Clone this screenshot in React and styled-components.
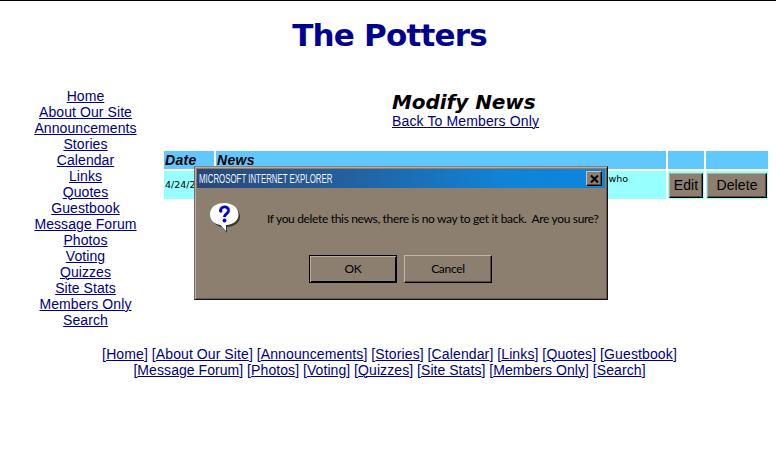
import React from "react";
import styled, { createGlobalStyle } from "styled-components";

const GlobalStyle = createGlobalStyle`
  * { box-sizing: border-box; }
  body { margin: 0; background: #fff; font-family: "Liberation Sans", Arial, sans-serif; overflow: hidden; }
`;

const Page = styled.div`
  position: relative;
  width: 776px;
  height: 457px;
  border-top: 1px solid #000;
`;

const SiteTitle = styled.h1`
  margin: 0;
  padding: 16px 0 0 3px;
  height: 87px;
  text-align: center;
  font: bold 31px/36px Verdana, "DejaVu Sans", sans-serif;
  letter-spacing: ${(p) => p.$spacing}px;
  color: #000090;
`;

const Columns = styled.div`
  display: flex;
  height: 258px;
`;

const SideNav = styled.nav`
  width: 164px;
  padding-left: 7px;
  display: flex;
  flex-direction: column;
  align-items: center;
`;

const Link = styled.a`
  font-size: 14px;
  line-height: 16px;
  letter-spacing: ${(p) => p.$spacing ?? 0.08}px;
  color: #000080;
  text-decoration: underline;
  text-underline-offset: 1px;
  text-decoration-thickness: 1px;
  white-space: nowrap;
`;

const Main = styled.main`
  width: 604px;
`;

const Intro = styled.header`
  margin-left: 228px;
  height: 63px;
  display: flex;
  flex-direction: column;
  align-items: flex-start;
`;

const Heading = styled.h2`
  margin: 0;
  padding-top: 2px;
  height: 25px;
  font: italic bold 20px/24px Verdana, "DejaVu Sans", sans-serif;
  letter-spacing: -0.05px;
  white-space: nowrap;
  color: #000;
`;

const NewsTable = styled.div`
  display: grid;
  grid-template-columns: 50px 450px 36px 62px;
  grid-template-rows: 18px 28px;
  gap: 2px;
`;

const HeadCell = styled.div`
  background: #60c8ff;
  padding-left: 1px;
  font: italic bold 14px/18px "Liberation Sans", Arial, sans-serif;
  letter-spacing: 0.3px;
`;

const Cell = styled.div`
  background: #98ffff;
  padding: ${(p) => p.$pad || "0 1px"};
  display: flex;
  justify-content: ${(p) => p.$align || "flex-start"};
  font: 9.5px/${(p) => p.$line || 27}px Verdana, "DejaVu Sans", sans-serif;
  white-space: nowrap;
`;

const TableButton = styled.button`
  flex: 1;
  height: 25px;
  margin-top: 2px;
  padding: 0 0 2px;
  background: #8c7f70;
  border: 1px solid;
  border-color: #b5aaa0 #000 #000 #b5aaa0;
  box-shadow: inset -1px -1px #51483f;
  font: 14px/20px "Liberation Sans", Arial, sans-serif;
  letter-spacing: 0.1px;
  color: #000;
`;

const FooterNav = styled.footer`
  display: flex;
  flex-direction: column;
  align-items: center;
  padding-left: 3px;
`;

const FooterRow = styled.div`
  font-size: 14px;
  line-height: 16px;
  letter-spacing: ${(p) => p.$spacing}px;
  word-spacing: -0.2px;
  color: #000080;
  white-space: nowrap;
  ${Link} { letter-spacing: inherit; }
`;

const Dialog = styled.section`
  position: absolute;
  left: 194px;
  top: 165px;
  width: 414px;
  height: 134px;
  padding: 2px;
  background: #8c7f70;
  border: 1px solid;
  border-color: #8c7f70 #17120e #17120e #776b60;
  box-shadow: inset 1px 1px #b9aea5, inset -1px -1px #655b51;
`;

const TitleBar = styled.div`
  display: flex;
  align-items: center;
  justify-content: space-between;
  height: 19px;
  padding: 0 3px 0 2px;
  background: linear-gradient(90deg, #294779 0%, #245f9d 35%, #1083d6 75%, #0c86dd 100%);
`;

const DialogTitle = styled.div`
  width: 134px;
  font: 13px/19px "Liberation Sans Narrow", "Liberation Sans", sans-serif;
  color: #f0f4ff;
  white-space: nowrap;
  transform: scaleX(0.605);
  transform-origin: left;
`;

const CloseButton = styled.button`
  display: grid;
  place-items: center;
  width: 16px;
  height: 15px;
  padding: 0;
  background: #8c7f70;
  border: 1px solid;
  border-color: #c8beb4 #000 #000 #c8beb4;
  box-shadow: inset -1px -1px #51483f;
`;

const MessageRow = styled.div`
  display: flex;
  height: 67px;
  padding: 14px 0 0 12px;
  svg { flex: none; }
`;

const Message = styled.p`
  margin: 8px 0 0 26px;
  font: 12px/18px Lato, sans-serif;
  letter-spacing: ${(p) => p.$spacing}px;
  white-space: pre;
  color: #000;
`;

const Actions = styled.div`
  display: flex;
  gap: 7px;
  margin-left: 112px;
`;

const DialogButton = styled.button`
  width: 88px;
  height: 28px;
  padding: 0 0 1px;
  background: #8c7f70;
  border: 1px solid;
  border-color: ${(p) => (p.$default ? "#000" : "#c0b5ab #000 #000 #c0b5ab")};
  box-shadow: ${(p) =>
    p.$default
      ? "inset 1px 1px #b9aea5, inset -1px -1px #000"
      : "inset -1px -1px #51483f"};
  font: 12px/18px Lato, sans-serif;
  letter-spacing: -0.3px;
  color: #000;
`;

const navItems = [
  "Home", "About Our Site", "Announcements", "Stories", "Calendar", "Links",
  "Quotes", "Guestbook", "Message Forum", "Photos", "Voting", "Quizzes",
  "Site Stats", "Members Only", "Search",
];

function LinkRow({ items, spacing }) {
  return (
    <FooterRow $spacing={spacing}>
      {items.map((item, i) => (
        <React.Fragment key={item}>
          {i > 0 && " "}[<Link>{item}</Link>]
        </React.Fragment>
      ))}
    </FooterRow>
  );
}

function QuestionIcon() {
  return (
    <svg width="32" height="32" viewBox="0 0 32 32">
      <path d="M16 2C7 2 2 7 2 13.5c0 5.500 4 9.500 10 10.500l5 6v-6c8-.5 13-4.500 13-10.500C30 7 24 2 16 2Z" fill="#3d352e" transform="translate(1 1)" />
      <path d="M15 1C6 1 1 6 1 12.500c0 5.500 4 9.500 10.500 10.500l5.500 6v-6c8-.5 12.500-4.500 12.500-10.500C29.500 6 24 1 15 1Z" fill="#fff" />
      <path d="M11.500 9.500C11 3.500 20 3.500 19.500 9c-.3 2.500-4 3-4 6" fill="none" stroke="#0000d8" strokeWidth="2.800" />
      <circle cx="11.800" cy="9" r="1.700" fill="#0000d8" />
      <circle cx="15.500" cy="18.500" r="1.900" fill="#0000d8" />
    </svg>
  );
}

export default function App() {
  return (
    <>
      <GlobalStyle />
      <Page>
        <SiteTitle $spacing={-0.8}>The Potters</SiteTitle>
        <Columns>
          <SideNav>
            {navItems.map((item) => <Link key={item}>{item}</Link>)}
          </SideNav>
          <Main>
            <Intro>
              <Heading>Modify News</Heading>
              <Link $spacing={0.13}>Back To Members Only</Link>
            </Intro>
            <NewsTable>
              <HeadCell>Date</HeadCell>
              <HeadCell>News</HeadCell>
              <HeadCell />
              <HeadCell />
              <Cell>4/24/2</Cell>
              <Cell $align="flex-end" $pad="0 38px 0 0" $line={15}>who</Cell>
              <Cell><TableButton>Edit</TableButton></Cell>
              <Cell><TableButton>Delete</TableButton></Cell>
            </NewsTable>
          </Main>
        </Columns>
        <FooterNav>
          <LinkRow items={navItems.slice(0, 8)} spacing={0.12} />
          <LinkRow items={navItems.slice(8)} spacing={0.08} />
        </FooterNav>
        <Dialog>
          <TitleBar>
            <DialogTitle>MICROSOFT INTERNET EXPLORER</DialogTitle>
            <CloseButton aria-label="Close">
              <svg width="9" height="8" viewBox="0 0 9 8">
                <path d="M1 .5 8 7.500M8 .5 1 7.500" stroke="#000" strokeWidth="2" />
              </svg>
            </CloseButton>
          </TitleBar>
          <MessageRow>
            <QuestionIcon />
            <Message $spacing={-0.33}>{"If you delete this news, there is no way to get it back.  Are you sure?"}</Message>
          </MessageRow>
          <Actions>
            <DialogButton $default>OK</DialogButton>
            <DialogButton>Cancel</DialogButton>
          </Actions>
        </Dialog>
      </Page>
    </>
  );
}
